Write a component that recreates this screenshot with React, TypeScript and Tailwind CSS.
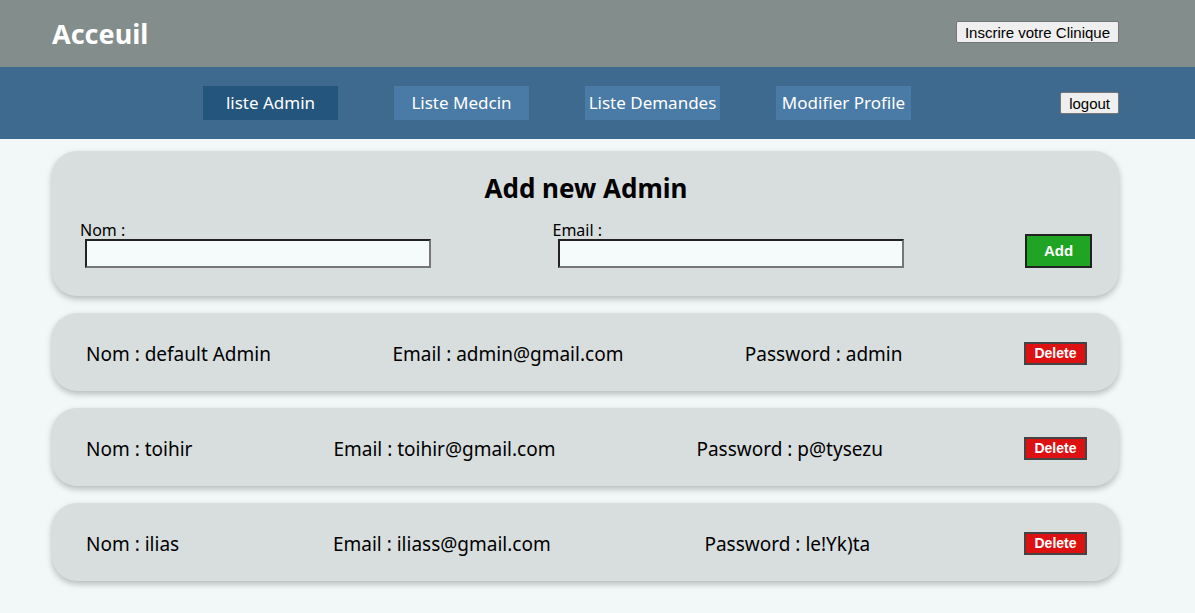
import React from "react";

const font = { fontFamily: '"Noto Sans", "Open Sans", sans-serif' };

const admins = [
  { nom: "default Admin", email: "admin@gmail.com", password: "admin" },
  { nom: "toihir", email: "toihir@gmail.com", password: "p@tysezu" },
  { nom: "ilias", email: "iliass@gmail.com", password: "le!Yk)ta" },
];

const navItems = ["liste Admin", "Liste Medcin", "Liste Demandes", "Modifier Profile"];

export default function App() {
  return (
    <div className="min-h-[613px] bg-[#f2f7f7]" style={font}>
      <header className="h-[67px] bg-[#838d8b] flex items-center justify-between pl-[52px] pr-[76px]">
        <h1 className="text-white font-bold text-[27px] leading-none">Acceuil</h1>
        <button className="h-[22px] mb-[3px] px-[8px] bg-[#efefef] border border-[#767676] rounded-[2px] text-[15px] text-black font-['Liberation_Sans',sans-serif] leading-none">
          Inscrire votre Clinique
        </button>
      </header>
      <nav className="h-[72px] bg-[#3d6a8e] flex items-center pl-[203px] pr-[76px]">
        <div className="flex gap-[56px]">
          {navItems.map((n, i) => (
            <div
              key={n}
              className={`w-[135px] h-[34px] flex items-center justify-center text-white text-[17px] ${
                i === 0 ? "bg-[#24557c]" : "bg-[#4a7ba6]"
              }`}
            >
              {n}
            </div>
          ))}
        </div>
        <button className="ml-auto h-[22px] px-[8px] bg-[#efefef] border border-[#767676] rounded-[2px] text-[15px] text-black font-['Liberation_Sans',sans-serif] leading-none">
          logout
        </button>
      </nav>
      <main className="px-[52px] pr-[76px] pt-[12px] flex flex-col gap-[17px]">
        <section className="h-[145px] bg-[#d8dddd] rounded-[25px] shadow-[0_3px_6px_rgba(0,0,0,0.25)] pl-[28px] pr-[27px] pt-[19px]">
          <h2 className="text-center font-bold text-[26px] leading-[36px] text-black">Add new Admin</h2>
          <div className="flex justify-between items-end mt-[15px]">
            <div className="flex flex-col">
              <label className="text-[16px] leading-[18px] text-black">Nom :</label>
              <input className="ml-[5px] w-[346px] h-[29px] bg-[#f5fafa] border-2 border-t-[#222] border-l-[#222] border-b-[#767676] border-r-[#767676]" />
            </div>
            <div className="flex flex-col">
              <label className="text-[16px] leading-[18px] text-black">Email :</label>
              <input className="ml-[5px] w-[346px] h-[29px] bg-[#f5fafa] border-2 border-t-[#222] border-l-[#222] border-b-[#767676] border-r-[#767676]" />
            </div>
            <button className="w-[67px] h-[34px] bg-[#1fa523] text-white font-bold text-[15px] border-2 border-[#222] font-['Liberation_Sans',sans-serif]">
              Add
            </button>
          </div>
        </section>
        {admins.map((a) => (
          <div
            key={a.nom}
            className="h-[78px] bg-[#d8dddd] rounded-[25px] shadow-[0_3px_6px_rgba(0,0,0,0.25)] flex items-center justify-between pl-[34px] pr-[32px] text-[19px] text-black"
          >
            <span className="pt-[4px]">Nom : {a.nom}</span>
            <span className="pt-[4px]">Email : {a.email}</span>
            <span className="pt-[4px]">Password : {a.password}</span>
            <button className="w-[63px] h-[23px] mt-[2px] bg-[#dd1111] text-white font-bold text-[14px] border-2 border-[#444] font-['Liberation_Sans',sans-serif] leading-none">
              Delete
            </button>
          </div>
        ))}
      </main>
    </div>
  );
}
